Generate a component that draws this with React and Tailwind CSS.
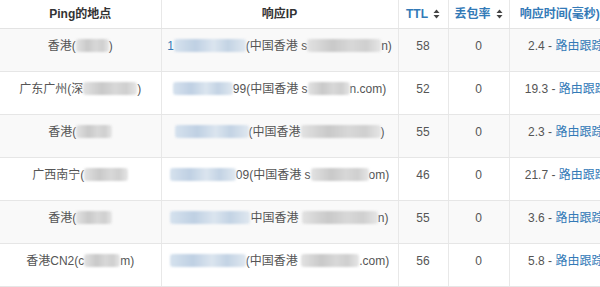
import React from 'react';

const rows = [
  {
    loc: [['t', '香港('], ['b', 33], ['t', ')']],
    ip: [['a', '1'], ['c', 72], ['t', '(中国香港 s'], ['g', 74], ['t', 'n)']],
    ttl: 58, loss: 0, time: '2.4',
  },
  {
    loc: [['t', '广东广州(深'], ['b', 54], ['t', ')']],
    ip: [['c', 60], ['t', '99(中国香港 s'], ['g', 42], ['t', 'n.com)']],
    ttl: 52, loss: 0, time: '19.3',
  },
  {
    loc: [['t', '香港('], ['b', 36]],
    ip: [['c', 74], ['t', '(中国香港'], ['g', 80], ['t', ')']],
    ttl: 55, loss: 0, time: '2.3',
  },
  {
    loc: [['t', '广西南宁('], ['b', 44]],
    ip: [['c', 66], ['t', '09(中国香港 s'], ['g', 58], ['t', 'om)']],
    ttl: 46, loss: 0, time: '21.7',
  },
  {
    loc: [['t', '香港('], ['b', 36]],
    ip: [['c', 80], ['t', '中国香港 '], ['g', 76], ['t', 'n)']],
    ttl: 55, loss: 0, time: '3.6',
  },
  {
    loc: [['t', '香港CN2(c'], ['b', 36], ['t', 'm)']],
    ip: [['c', 76], ['t', '(中国香港 '], ['g', 58], ['t', '.com)']],
    ttl: 56, loss: 0, time: '5.8',
  },
];

function Blur({ kind, w }) {
  const tone =
    kind === 'c'
      ? 'bg-[linear-gradient(90deg,#d6e2ee,#bfd0e3_30%,#dbe5ef_55%,#c3d3e4_75%,#e0e8f0)]'
      : 'bg-[linear-gradient(90deg,#e2e2e2,#c9c9c9_35%,#d8d8d8_60%,#cfcfcf_80%,#e6e6e6)]';
  return (
    <span
      className={`inline-block h-[13px] align-[-2px] rounded-[3px] blur-[1.2px] ${tone}`}
      style={{ width: w }}
    />
  );
}

function Parts({ parts }) {
  return parts.map(([k, v], i) => {
    if (k === 't') return <span key={i}>{v}</span>;
    if (k === 'a') return <span key={i} className="text-[#337ab7]">{v}</span>;
    return <Blur key={i} kind={k} w={v} />;
  });
}

function SortIcon() {
  return (
    <svg width="7" height="10" viewBox="0 0 7 10" className="ml-[5px] inline-block align-[-1px]">
      <path d="M3.5 0.5 L6.5 4 L0.5 4 Z" fill="#444" />
      <path d="M3.5 9.5 L6.5 6 L0.5 6 Z" fill="#444" />
    </svg>
  );
}

export default function App() {
  const th = 'h-[28px] border-b border-[#e3e3e3] px-1 text-center align-middle font-bold';
  const td = 'h-[43px] border-b border-[#e6e6e6] px-1 pt-[8px] text-center align-top leading-[18px]';
  return (
    <div className="w-[600px] h-[287px] overflow-hidden bg-white font-['Liberation_Sans','Noto_Sans_CJK_SC',sans-serif] text-[12px] text-[#555]">
      <table className="w-[622px] table-fixed border-collapse">
        <colgroup>
          <col className="w-[161px]" />
          <col className="w-[237px]" />
          <col className="w-[50px]" />
          <col className="w-[61px]" />
          <col className="w-[113px]" />
        </colgroup>
        <thead>
          <tr>
            <th className={`${th} border-r border-r-[#e8e8e8] text-[#333]`}>Ping的地点</th>
            <th className={`${th} border-r border-r-[#e8e8e8] text-[#333]`}>响应IP</th>
            <th className={`${th} border-r border-r-[#e8e8e8] text-[#337ab7]`}>
              TTL<SortIcon />
            </th>
            <th className={`${th} border-r border-r-[#e8e8e8] text-[#337ab7]`}>
              丢包率<SortIcon />
            </th>
            <th className={`${th} whitespace-nowrap text-[#337ab7]`}>
              响应时间(毫秒)<SortIcon />
            </th>
          </tr>
        </thead>
        <tbody>
          {rows.map((r, i) => (
            <tr key={i} className={i % 2 === 0 ? 'bg-[#f9f9f9]' : 'bg-white'}>
              <td className={`${td} border-r border-r-[#e8e8e8] whitespace-nowrap`}>
                <Parts parts={r.loc} />
              </td>
              <td className={`${td} border-r border-r-[#e8e8e8] whitespace-nowrap`}>
                <Parts parts={r.ip} />
              </td>
              <td className={`${td} border-r border-r-[#e8e8e8]`}>{r.ttl}</td>
              <td className={`${td} border-r border-r-[#e8e8e8]`}>{r.loss}</td>
              <td className={`${td} whitespace-nowrap`}>
                {r.time} - <span className="text-[#337ab7]">路由跟踪</span>
              </td>
            </tr>
          ))}
        </tbody>
      </table>
    </div>
  );
}
